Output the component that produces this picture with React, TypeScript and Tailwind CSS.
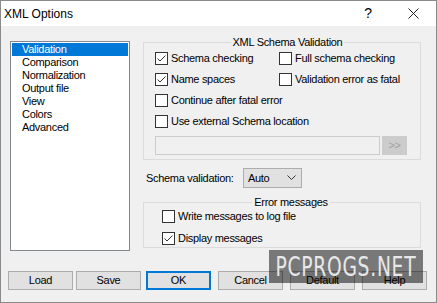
import React from "react";

const font = { fontFamily: '"Liberation Sans", Arial, sans-serif' };

const Check: React.FC<{ on?: boolean }> = ({ on }) => (
  <span className="flex h-[13px] w-[13px] shrink-0 items-center justify-center border border-[#333333] bg-white">
    {on && (
      <svg width="11" height="11" viewBox="0 0 11 11">
        <path d="M1.5 5.5 L4 8 L9.5 2.5" fill="none" stroke="#333333" strokeWidth="1" />
      </svg>
    )}
  </span>
);

const Box: React.FC<{ on?: boolean; label: string; className?: string }> = ({ on, label, className }) => (
  <div className={`flex items-center gap-[3px] ${className ?? ""}`}>
    <Check on={on} />
    <span className="whitespace-nowrap">{label}</span>
  </div>
);

const pages = ["Validation", "Comparison", "Normalization", "Output file", "View", "Colors", "Advanced"];

export default function App() {
  return (
    <div className="relative h-[303px] w-[437px] overflow-hidden border border-[#8a8a8a] bg-[#f0f0f0] text-[11px] tracking-[-0.3px] text-black" style={font}>
      {/* title bar */}
      <div className="flex h-[25px] items-center bg-white pl-[3px] text-[12px] tracking-normal">
        <span>XML Options</span>
        <span className="ml-auto mr-[36px] text-[14px]">?</span>
        <svg width="11" height="11" viewBox="0 0 11 11" className="mr-[17px]">
          <path d="M0.5 0.5 L10.5 10.5 M10.5 0.5 L0.5 10.5" stroke="#222" strokeWidth="1" />
        </svg>
      </div>

      <div className="flex items-start pl-[9px] pt-[10px]">
        {/* page list */}
        <div className="mt-[5px] h-[210px] w-[120px] border border-[#828790] bg-white py-[1px] px-[1px]">
          {pages.map((p, i) => (
            <div
              key={p}
              className={`flex h-[13px] items-center pl-[10px] leading-[13px] ${i === 0 ? "bg-[#0078d7] text-white" : ""}`}
            >
              {p}
            </div>
          ))}
        </div>

        <div className="ml-[13px] flex w-[278px] flex-col">
          <fieldset className="border border-[#dcdcdc] pb-[4px] pl-[11px]">
            <legend className="mx-auto px-[2px] leading-[12px]">XML Schema Validation</legend>
            <div className="flex h-[21px] items-center">
              <Box on label="Schema checking" className="w-[124px]" />
              <Box label="Full schema checking" />
            </div>
            <div className="flex h-[21px] items-center">
              <Box on label="Name spaces" className="w-[124px]" />
              <Box label="Validation error as fatal" />
            </div>
            <div className="flex h-[21px] items-center">
              <Box label="Continue after fatal error" />
            </div>
            <div className="flex h-[21px] items-center">
              <Box label="Use external Schema location" />
            </div>
            <div className="mt-[4px] flex h-[19px] items-stretch">
              <div className="w-[225px] border border-[#cccccc] bg-[#f0f0f0]" />
              <div className="ml-[2px] flex w-[25px] items-center justify-center bg-[#cccccc] text-[#a0a0a0]">&gt;&gt;</div>
            </div>
          </fieldset>

          <div className="mt-[8px] flex h-[20px] items-center pl-[3px]">
            <span className="w-[97px]">Schema validation:</span>
            <div className="flex h-[20px] w-[59px] items-center border border-[#adadad] bg-[#e1e1e1] pl-[4px] pr-[5px]">
              <span>Auto</span>
              <svg width="9" height="6" viewBox="0 0 9 6" className="ml-auto">
                <path d="M0.5 0.5 L4.5 4.5 L8.5 0.5" fill="none" stroke="#333" strokeWidth="1" />
              </svg>
            </div>
          </div>

          <fieldset className="mt-[8px] border border-[#dcdcdc] pb-[1px] pl-[18px]">
            <legend className="mx-auto px-[2px] leading-[12px]">Error messages</legend>
            <div className="flex h-[16px] items-center">
              <Box label="Write messages to log file" />
            </div>
            <div className="mt-[6px] flex h-[16px] items-center">
              <Box on label="Display messages" />
            </div>
          </fieldset>
        </div>
      </div>

      {/* buttons */}
      <div className="mt-[20px] flex pl-[7px]">
        {["Load", "Save", "OK", "Cancel", "Default", "Help"].map((b, i) => (
          <button
            key={b}
            className={`flex h-[19px] w-[65px] items-center justify-center bg-[#e1e1e1] ${
              b === "OK" ? "border-2 border-[#0078d7]" : "border border-[#adadad]"
            } ${["", "ml-[3px]", "ml-[5px]", "ml-[7px]", "ml-[7px]", "ml-[7px]"][i]}`}
          >
            {b}
          </button>
        ))}
      </div>

      {/* watermark overlay */}
      <div className="absolute left-[268px] top-[249px] flex h-[33px] w-[154px] items-center justify-center bg-black/50">
        <span
          className="inline-block scale-x-[0.72] whitespace-nowrap text-[26px] leading-none tracking-[1px] text-[#e8e8e8]"
          style={{ fontFamily: '"DejaVu Sans", sans-serif' }}
        >
          PCPROGS.NET
        </span>
      </div>
    </div>
  );
}
